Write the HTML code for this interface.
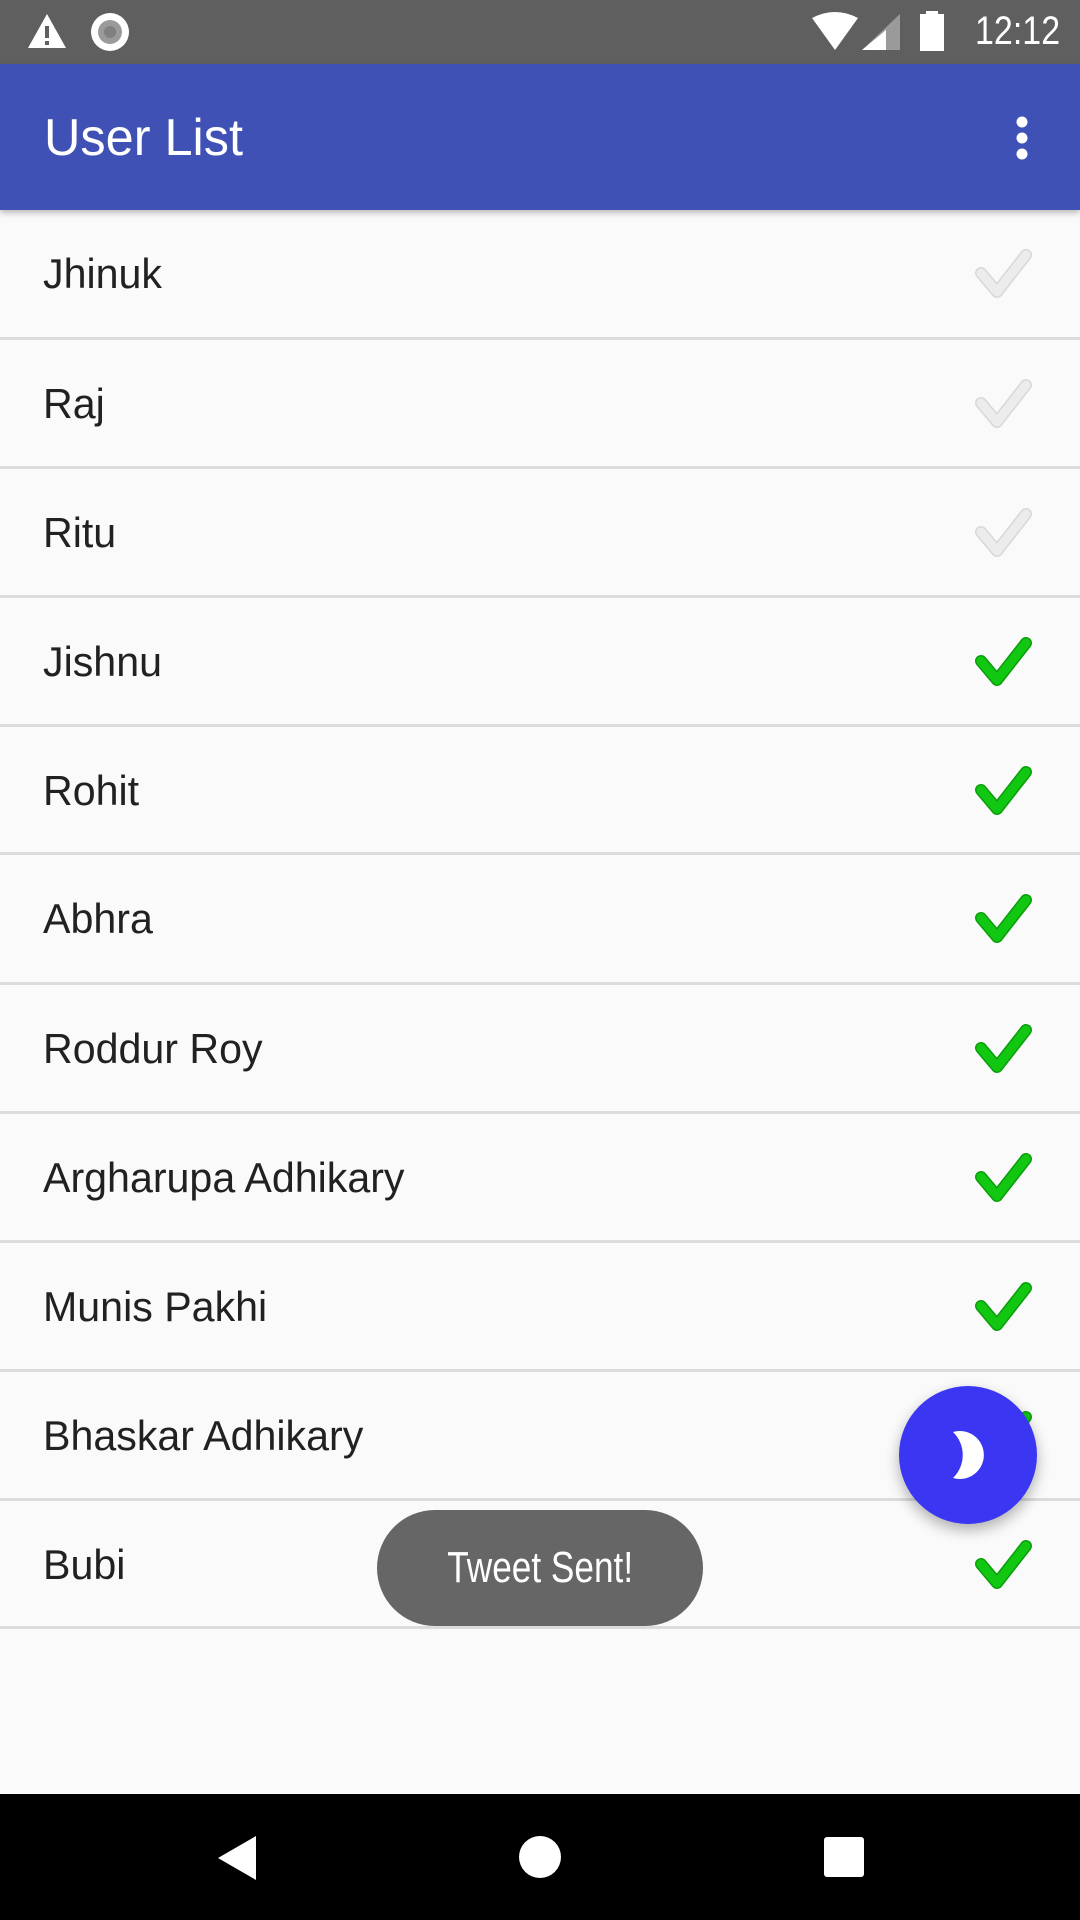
<!DOCTYPE html>
<html><head><meta charset="utf-8"><style>
*{margin:0;padding:0;box-sizing:border-box}
body{width:1080px;height:1920px;background:#fafafa;position:relative;overflow:hidden;font-family:"Liberation Sans",sans-serif}
.sb{position:absolute;left:0;top:0;width:1080px;height:64px;background:#5f5f5f}
.ab{position:absolute;left:0;top:64px;width:1080px;height:146px;background:#3f51b5;box-shadow:0 3px 6px rgba(0,0,0,.25);z-index:2}
.title{position:absolute;left:44px;top:44px;color:#fff;font-size:52px;line-height:60px;transform:scaleX(.97);transform-origin:left}
.row{position:absolute;left:0;width:1080px;height:129px}
.name{position:absolute;left:43px;top:40px;font-size:42px;line-height:48px;color:#212121;transform:scaleX(.98);transform-origin:left}
.div{position:absolute;left:0;width:1080px;height:3px;background:#dcdcdc}
.tick{position:absolute;left:972px;top:37px}
.nav{position:absolute;left:0;top:1794px;width:1080px;height:126px;background:#000}
</style></head><body>
<div class="sb">
<svg style="position:absolute;left:26px;top:12px" width="42" height="38" viewBox="0 0 42 38"><path d="M21 2 L40 36 L2 36 Z" fill="#fff"/><rect x="19" y="14" width="4" height="12" fill="#5f5f5f"/><rect x="19" y="29" width="4" height="4" fill="#5f5f5f"/></svg>
<svg style="position:absolute;left:90px;top:12px" width="40" height="40"><circle cx="20" cy="20" r="19" fill="#fff"/><circle cx="20" cy="20" r="12" fill="#9a9a9a"/><circle cx="20" cy="20" r="6" fill="#808080"/></svg>
<svg style="position:absolute;left:810px;top:12px" width="50" height="40"><path d="M2 6 Q25 -6 48 6 L25 38 Z" fill="#fff"/></svg>
<svg style="position:absolute;left:862px;top:14px" width="40" height="38"><path d="M38 0 L38 36 L0 36 Z" fill="#9a9a9a"/><path d="M24 16 L24 36 L0 36 Z" fill="#fff"/></svg>
<svg style="position:absolute;left:920px;top:11px" width="24" height="40"><rect x="6" y="0" width="12" height="4" fill="#fff"/><rect x="0" y="3" width="24" height="37" fill="#fff"/></svg>
<div style="position:absolute;right:20px;top:8px;color:#fff;font-size:40px;line-height:46px;transform:scaleX(.85);transform-origin:right">12:12</div>
</div>
<div class="ab"><div class="title">User List</div>
<svg style="position:absolute;left:1012px;top:50px" width="20" height="50"><circle cx="10" cy="8" r="5.5" fill="#fff"/><circle cx="10" cy="24" r="5.5" fill="#fff"/><circle cx="10" cy="40" r="5.5" fill="#fff"/></svg>
</div>

<div class="row" style="top:210px"><div class="name">Jhinuk</div><svg class="tick" width="62" height="54" viewBox="0 0 62 54"><path d="M9 26 L25 45 L54 8" fill="none" stroke="#d8d8d8" stroke-width="12" stroke-linecap="round" stroke-linejoin="round"/><path d="M9 26 L25 45 L54 8" fill="none" stroke="#ececec" stroke-width="9" stroke-linecap="round" stroke-linejoin="round"/></svg></div>
<div class="div" style="top:337px"></div>
<div class="row" style="top:340px"><div class="name">Raj</div><svg class="tick" width="62" height="54" viewBox="0 0 62 54"><path d="M9 26 L25 45 L54 8" fill="none" stroke="#d8d8d8" stroke-width="12" stroke-linecap="round" stroke-linejoin="round"/><path d="M9 26 L25 45 L54 8" fill="none" stroke="#ececec" stroke-width="9" stroke-linecap="round" stroke-linejoin="round"/></svg></div>
<div class="div" style="top:466px"></div>
<div class="row" style="top:469px"><div class="name">Ritu</div><svg class="tick" width="62" height="54" viewBox="0 0 62 54"><path d="M9 26 L25 45 L54 8" fill="none" stroke="#d8d8d8" stroke-width="12" stroke-linecap="round" stroke-linejoin="round"/><path d="M9 26 L25 45 L54 8" fill="none" stroke="#ececec" stroke-width="9" stroke-linecap="round" stroke-linejoin="round"/></svg></div>
<div class="div" style="top:595px"></div>
<div class="row" style="top:598px"><div class="name">Jishnu</div><svg class="tick" width="62" height="54" viewBox="0 0 62 54"><path d="M9 26 L25 45 L54 8" fill="none" stroke="#0a9e0a" stroke-width="12" stroke-linecap="round" stroke-linejoin="round"/><path d="M9 26 L25 45 L54 8" fill="none" stroke="#12c712" stroke-width="9" stroke-linecap="round" stroke-linejoin="round"/></svg></div>
<div class="div" style="top:724px"></div>
<div class="row" style="top:727px"><div class="name">Rohit</div><svg class="tick" width="62" height="54" viewBox="0 0 62 54"><path d="M9 26 L25 45 L54 8" fill="none" stroke="#0a9e0a" stroke-width="12" stroke-linecap="round" stroke-linejoin="round"/><path d="M9 26 L25 45 L54 8" fill="none" stroke="#12c712" stroke-width="9" stroke-linecap="round" stroke-linejoin="round"/></svg></div>
<div class="div" style="top:852px"></div>
<div class="row" style="top:855px"><div class="name">Abhra</div><svg class="tick" width="62" height="54" viewBox="0 0 62 54"><path d="M9 26 L25 45 L54 8" fill="none" stroke="#0a9e0a" stroke-width="12" stroke-linecap="round" stroke-linejoin="round"/><path d="M9 26 L25 45 L54 8" fill="none" stroke="#12c712" stroke-width="9" stroke-linecap="round" stroke-linejoin="round"/></svg></div>
<div class="div" style="top:982px"></div>
<div class="row" style="top:985px"><div class="name">Roddur Roy</div><svg class="tick" width="62" height="54" viewBox="0 0 62 54"><path d="M9 26 L25 45 L54 8" fill="none" stroke="#0a9e0a" stroke-width="12" stroke-linecap="round" stroke-linejoin="round"/><path d="M9 26 L25 45 L54 8" fill="none" stroke="#12c712" stroke-width="9" stroke-linecap="round" stroke-linejoin="round"/></svg></div>
<div class="div" style="top:1111px"></div>
<div class="row" style="top:1114px"><div class="name">Argharupa Adhikary</div><svg class="tick" width="62" height="54" viewBox="0 0 62 54"><path d="M9 26 L25 45 L54 8" fill="none" stroke="#0a9e0a" stroke-width="12" stroke-linecap="round" stroke-linejoin="round"/><path d="M9 26 L25 45 L54 8" fill="none" stroke="#12c712" stroke-width="9" stroke-linecap="round" stroke-linejoin="round"/></svg></div>
<div class="div" style="top:1240px"></div>
<div class="row" style="top:1243px"><div class="name">Munis Pakhi</div><svg class="tick" width="62" height="54" viewBox="0 0 62 54"><path d="M9 26 L25 45 L54 8" fill="none" stroke="#0a9e0a" stroke-width="12" stroke-linecap="round" stroke-linejoin="round"/><path d="M9 26 L25 45 L54 8" fill="none" stroke="#12c712" stroke-width="9" stroke-linecap="round" stroke-linejoin="round"/></svg></div>
<div class="div" style="top:1369px"></div>
<div class="row" style="top:1372px"><div class="name">Bhaskar Adhikary</div><svg class="tick" width="62" height="54" viewBox="0 0 62 54"><path d="M9 26 L25 45 L54 8" fill="none" stroke="#0a9e0a" stroke-width="12" stroke-linecap="round" stroke-linejoin="round"/><path d="M9 26 L25 45 L54 8" fill="none" stroke="#12c712" stroke-width="9" stroke-linecap="round" stroke-linejoin="round"/></svg></div>
<div class="div" style="top:1498px"></div>
<div class="row" style="top:1501px"><div class="name">Bubi</div><svg class="tick" width="62" height="54" viewBox="0 0 62 54"><path d="M9 26 L25 45 L54 8" fill="none" stroke="#0a9e0a" stroke-width="12" stroke-linecap="round" stroke-linejoin="round"/><path d="M9 26 L25 45 L54 8" fill="none" stroke="#12c712" stroke-width="9" stroke-linecap="round" stroke-linejoin="round"/></svg></div>
<div class="div" style="top:1626px"></div>

<div style="position:absolute;left:377px;top:1510px;width:326px;height:116px;border-radius:58px;background:#666;color:#fff;text-align:center;line-height:116px;font-size:44px"><span style="display:inline-block;transform:scaleX(.8)">Tweet Sent!</span></div>

<div style="position:absolute;left:899px;top:1386px;width:138px;height:138px;border-radius:50%;background:#3a36f2;box-shadow:0 6px 14px rgba(0,0,0,.3)">
<svg style="position:absolute;left:50px;top:44px" width="42" height="50" viewBox="0 0 42 50"><path d="M4 2 A24 24 0 1 1 4 48 A32 32 0 0 0 4 2 Z" fill="#fff"/></svg>
</div>

<div class="nav">
<svg style="position:absolute;left:216px;top:42px" width="42" height="44"><path d="M40 0 L40 44 L2 22 Z" fill="#fff"/></svg>
<div style="position:absolute;left:519px;top:42px;width:42px;height:42px;border-radius:50%;background:#fff"></div>
<div style="position:absolute;left:824px;top:43px;width:40px;height:40px;border-radius:3px;background:#fff"></div>
</div>
</body></html>
